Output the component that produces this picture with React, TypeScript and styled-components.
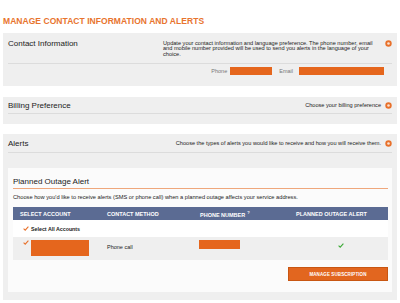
import React from 'react';
import styled, { createGlobalStyle } from 'styled-components';

const GlobalStyle = createGlobalStyle`
  body {
    margin: 0;
    background: #ffffff;
    font-family: 'Liberation Sans', Arial, sans-serif;
    color: #222;
  }
`;

const Page = styled.div`
  padding: 0 3px;
  width: 394px;
`;

const Title = styled.h1`
  margin: 0 0 7px;
  padding-top: 16px;
  font-size: 8.5px;
  line-height: 10px;
  font-weight: 700;
  color: #e8742e;
  letter-spacing: 0.05px;
`;

const Panel = styled.section<{ $gap?: number; $bottom?: number }>`
  background: #efefef;
  padding: 0 5px ${(p) => p.$bottom ?? 10}px;
  margin-bottom: ${(p) => p.$gap ?? 10}px;
`;

const PanelHead = styled.div<{ $top: number; $height: number }>`
  display: flex;
  align-items: flex-start;
  padding-top: ${(p) => p.$top}px;
  height: ${(p) => p.$height}px;
  box-sizing: border-box;
  border-bottom: 1px solid #dcdcdc;
`;

const PanelTitle = styled.div`
  flex: 1;
  font-size: 8px;
  line-height: 10px;
  color: #222;
`;

const Note = styled.div<{ $width?: number }>`
  font-size: 5.6px;
  line-height: 5.4px;
  color: #222;
  margin-top: 2px;
  ${(p) => (p.$width ? `width: ${p.$width}px;` : '')}
`;

const InfoDot = () => (
  <svg width="7" height="7" viewBox="0 0 7 7" style={{ marginLeft: 4, marginTop: 1, flex: 'none' }}>
    <circle cx="3.5" cy="3.5" r="3.2" fill="#e8702a" />
    <circle cx="3.5" cy="3.5" r="1.3" fill="#fbe3d2" />
  </svg>
);

const ContactRow = styled.div`
  display: flex;
  justify-content: flex-end;
  align-items: center;
  gap: 3px;
  padding: 3px 8px 0 0;
`;

const Label = styled.span`
  font-size: 5.5px;
  color: #777;
  margin-left: 4px;
`;

const Redacted = styled.div<{ $w: number; $h: number }>`
  width: ${(p) => p.$w}px;
  height: ${(p) => p.$h}px;
  background: #e5661d;
  flex: none;
`;

const Inner = styled.div`
  background: #fbfbfb;
  margin-top: 15px;
  padding: 0 4px 11px 5px;
`;

const SubTitle = styled.div`
  padding-top: 9px;
  padding-bottom: 1px;
  font-size: 8px;
  line-height: 10px;
  border-bottom: 1px solid #efa77c;
`;

const SubNote = styled.div`
  font-size: 5.7px;
  line-height: 6px;
  margin: 5px 0 7px;
  color: #222;
`;

const Grid = styled.div`
  display: grid;
  grid-template-columns: 87px 93px 82px 1fr;
`;

const HeadRow = styled(Grid)`
  background: #5b6b93;
  height: 13px;
  align-items: center;
`;

const HeadCell = styled.div<{ $center?: boolean }>`
  color: #ffffff;
  font-size: 5.5px;
  font-weight: 700;
  padding-left: ${(p) => (p.$center ? 0 : 7)}px;
  text-align: ${(p) => (p.$center ? 'center' : 'left')};
  white-space: nowrap;
`;

const Sup = styled.sup`
  font-size: 4px;
  margin-left: 2px;
  vertical-align: 3px;
`;

const SelectAll = styled.div`
  display: flex;
  align-items: center;
  gap: 2px;
  height: 17px;
  padding-left: 10px;
  background: #ffffff;
  font-size: 5.3px;
  font-weight: 700;
`;

const DataRow = styled(Grid)`
  background: #efefef;
  height: 23px;
  align-items: start;
  padding-top: 3px;
  box-sizing: border-box;
`;

const AccountCell = styled.div`
  display: flex;
  align-items: flex-start;
  gap: 2px;
  padding-left: 10px;
`;

const TextCell = styled.div`
  font-size: 5.5px;
  padding: 4px 0 0 7px;
`;

const PhoneCell = styled.div`
  padding-left: 6px;
`;

const AlertCell = styled.div`
  display: flex;
  justify-content: center;
  padding: 3px 0 0 18px;
`;

const Actions = styled.div`
  display: flex;
  justify-content: flex-end;
  margin-top: 7px;
`;

const Button = styled.button`
  width: 100px;
  height: 14px;
  background: #e2661f;
  border: 1px solid #c85612;
  color: #fff;
  font-family: 'Liberation Sans', Arial, sans-serif;
  font-size: 4.5px;
  font-weight: 700;
  letter-spacing: 0.1px;
  padding: 0;
`;

const Check = ({ color = '#e8702a' }: { color?: string }) => (
  <svg width="6" height="5" viewBox="0 0 6 5" style={{ flex: 'none' }}>
    <path d="M0.6 2.6 L2.2 4.1 L5.4 0.7" fill="none" stroke={color} strokeWidth="1.1" />
  </svg>
);

function App() {
  return (
    <Page>
      <GlobalStyle />
      <Title>MANAGE CONTACT INFORMATION AND ALERTS</Title>

      <Panel $gap={11} $bottom={11}>
        <PanelHead $top={6} $height={31}>
          <PanelTitle>Contact Information</PanelTitle>
          <Note $width={218}>
            Update your contact information and language preference. The phone number, email
            and mobile number provided will be used to send you alerts in the language of your
            choice.
          </Note>
          <InfoDot />
        </PanelHead>
        <ContactRow>
          <Label>Phone</Label>
          <Redacted $w={42} $h={8} />
          <Label>Email</Label>
          <Redacted $w={85} $h={8} style={{ marginLeft: 3 }} />
        </ContactRow>
      </Panel>

      <Panel $gap={10} $bottom={10}>
        <PanelHead $top={4} $height={17}>
          <PanelTitle>Billing Preference</PanelTitle>
          <Note>Choose your billing preference</Note>
          <InfoDot />
        </PanelHead>
      </Panel>

      <Panel $gap={0} $bottom={8}>
        <PanelHead $top={5} $height={19}>
          <PanelTitle>Alerts</PanelTitle>
          <Note>Choose the types of alerts you would like to receive and how you will receive them.</Note>
          <InfoDot />
        </PanelHead>
        <Inner>
          <SubTitle>Planned Outage Alert</SubTitle>
          <SubNote>
            Choose how you'd like to receive alerts (SMS or phone call) when a planned outage affects your service address.
          </SubNote>
          <HeadRow>
            <HeadCell>SELECT ACCOUNT</HeadCell>
            <HeadCell>CONTACT METHOD</HeadCell>
            <HeadCell>
              PHONE NUMBER<Sup>?</Sup>
            </HeadCell>
            <HeadCell $center>PLANNED OUTAGE ALERT</HeadCell>
          </HeadRow>
          <SelectAll>
            <Check />
            Select All Accounts
          </SelectAll>
          <DataRow>
            <AccountCell>
              <Check />
              <Redacted $w={58} $h={16} />
            </AccountCell>
            <TextCell>Phone call</TextCell>
            <PhoneCell>
              <Redacted $w={41} $h={9} />
            </PhoneCell>
            <AlertCell>
              <Check color="#3aa935" />
            </AlertCell>
          </DataRow>
          <Actions>
            <Button>MANAGE SUBSCRIPTION</Button>
          </Actions>
        </Inner>
      </Panel>
    </Page>
  );
}

export default App;
